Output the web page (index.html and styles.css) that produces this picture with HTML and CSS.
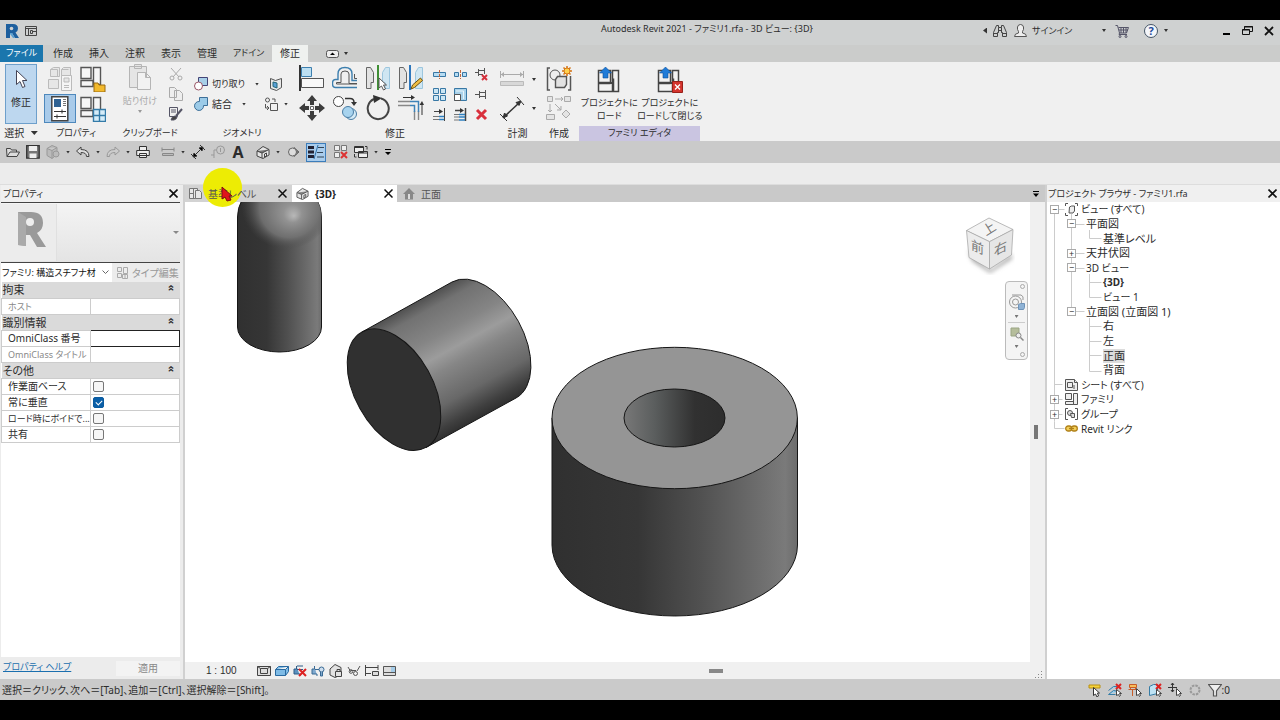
FILE: index.html
```html
<!DOCTYPE html>
<html lang="ja">
<head>
<meta charset="utf-8">
<title>Autodesk Revit 2021</title>
<link rel="stylesheet" href="styles.css">
</head>
<body>
<div class="app">
<header class="titlebar">
  <div class="title-left">
    <svg width="14" height="16" viewBox="0 0 14 16"><path fill="#1d5f9e" d="M1 1h7q5 0 5 4.500q0 3-2.500 4L14 15h-4L7 10H5v5H1z"/><path fill="#5ba0d0" d="M5 10h2l3 5H8L5 11z"/><circle cx="6.500" cy="5.500" r="1.800" fill="#d0d2d2"/></svg>
    <svg width="12" height="12" viewBox="0 0 12 12" fill="none" stroke="#444"><path d="M.5 1.500h11v9H.5zM.5 3.500h11M3.500 3.500v7M5.500 5.500h2v3h-2zM8 6.500h3"/></svg>
  </div>
  <h1 class="app-title">Autodesk Revit 2021 - ファミリ1.rfa - 3D ビュー: {3D}</h1>
  <div class="title-right">
    <i class="lf"></i>
    <button class="find" aria-label="検索"><svg width="14" height="14" viewBox="0 0 14 14" fill="none" stroke="#444"><path d="M3.500 1.500h2v2h3v-2h2l3 7v4h-4v-4h-1v-2h-3v2h-1v4h-4v-4zM1 9.500h4M9 9.500h4M5.500 3.500v5M8.500 3.500v5"/></svg></button>
    <button class="signin"><svg width="13" height="14" viewBox="0 0 13 14" fill="#eee" stroke="#555"><path d="M.5 12.500q0-3 4-3.500V7.500q-1.500-2-1-4.500Q4 .5 6.500.5T9.500 3q.5 2.500-1 4.500V9q4 .5 4 3.500z"/></svg><span>サインイン</span><i class="dn"></i></button>
    <button class="cart" aria-label="ストア"><svg width="14" height="14" viewBox="0 0 14 14" fill="none" stroke="#555568"><path d="M.5 1.500h2l2 7.500h7l2-5.500H3.500M4 6h9M6 4v5M8.500 4v5M11 4v5M4.500 9L4 10.500h8"/><circle cx="5" cy="12.500" r="1"/><circle cx="11" cy="12.500" r="1"/></svg></button>
    <button class="help" aria-label="ヘルプ"><b class="qmark">?</b><i class="dn"></i></button>
    <button class="min" aria-label="最小化"><svg width="8" height="10" viewBox="0 0 8 10"><path d="M0 7h7v2H0z"/></svg></button>
    <button class="win" aria-label="元に戻す"><svg width="11" height="10" viewBox="0 0 11 10" fill="none" stroke="#111"><path d="M2.500 3V.5h8v5H8M2 1h9M.5 3.500h7v5h-7zM.5 4h7"/></svg></button>
    <button class="win" aria-label="閉じる"><svg width="10" height="10" viewBox="0 0 10 10" stroke="#111" stroke-width="1.800"><path d="M1 1l8 8M9 1L1 9"/></svg></button>
  </div>
</header>
<nav class="tabs">
  <button class="file kana">ファイル</button>
  <button>作成</button><button>挿入</button><button>注釈</button><button>表示</button><button>管理</button><button class="addin kana">アドイン</button><button class="on">修正</button>
  <button class="toggle" aria-label="リボン切替"><svg width="13" height="8" viewBox="0 0 13 8"><rect x=".5" y=".5" width="12" height="7" rx="2" fill="#eee" stroke="#555"/><path d="M4 5h5L6.500 2.500z"/></svg><i class="dn"></i></button>
</nav>
<section class="ribbon">
  <div class="panel p-select">
    <div class="body"><button class="modify"><svg width="14" height="20" viewBox="0 0 14 20"><path d="M2.500 1.500v14l3.500-3 2.500 6 2.500-1-2.500-6H13z" fill="#fff" stroke="#445"/></svg>修正</button></div>
    <h2>選択 <i class="dn big"></i></h2>
  </div>
  <div class="panel p-prop">
    <div class="body g2">
      <button aria-label="タイプ"><svg width="26" height="26" viewBox="0 0 26 26" fill="#e6e6e6" stroke="#bbb"><path d="M3.500 3.500l3-2h6v9h-9zM14.500 3.500l2-2h7v9h-9zM1.500 13.500h10v9h-10zM3.500 3.500h7v7M14.500 3.500h7"/><path fill="#f5f5f5" d="M14.500 9.500h10v15h-10z"/><path d="M17 12h5v4h-5zM17 19.500h5M17 21.500h5"/></svg></button>
      <button aria-label="ファミリ カテゴリ"><svg width="26" height="26" viewBox="0 0 26 26"><path d="M1 1.500h10v11H1zM13.500 1.500h7v17h-7zM1 14.500h12v6H1z" fill="#f6f6f6" stroke="#555" stroke-width="1.400"/><path d="M14 17h4l1 2h6v7H14z" fill="#f2b92c" stroke="#9a6a10"/></svg></button>
      <button class="sel" aria-label="プロパティ"><svg width="18" height="26" viewBox="0 0 18 26"><path d="M.8.8h16v24H.8z" fill="#fff" stroke="#444" stroke-width="1.500"/><path d="M3 3h7v8H3z" fill="#2f6293"/><path d="M12 3.500h3M12 5.500h3M12 7.500h3M12 9.500h3" stroke="#777"/><path d="M3 15.500h12M3 20.500h12M11 13.500v4M6 18.500v4" stroke="#333" fill="none"/></svg></button>
      <button aria-label="ファミリ タイプ"><svg width="26" height="26" viewBox="0 0 26 26"><path d="M1 1.500h10v11H1zM13.500 1.500h7v17h-7zM1 14.500h12v6H1z" fill="#f6f6f6" stroke="#555" stroke-width="1.400"/><path d="M13.500 13.500h12v12h-12zM19.500 13.500v12M13.500 19.500h12" fill="#d5ecf8" stroke="#347ba8" stroke-width="1.400"/></svg></button>
    </div>
    <h2 class="kana">プロパティ</h2>
  </div>
  <div class="panel p-clip">
    <div class="body">
      <button class="paste"><svg width="22" height="26" viewBox="0 0 22 26" fill="#e5e5e5" stroke="#b5b5b5"><path d="M.5 2.500h17v21H.5zM5.500.5h7v4h-7z"/><path fill="#f2f2f2" d="M8.500 8.500h8l5 5v12h-13zM16.500 8.500v5h5"/></svg><span class="kana">貼り付け</span><i class="dn"></i></button>
      <div class="col3">
        <button aria-label="切り取り"><svg width="14" height="14" viewBox="0 0 14 14" fill="none" stroke="#aaa"><path d="M2 1l8 9M12 1L4 10"/><circle cx="3" cy="11" r="2"/><circle cx="11" cy="11" r="2"/></svg></button>
        <button aria-label="コピー"><svg width="14" height="14" viewBox="0 0 14 14" fill="#eee" stroke="#aaa"><path d="M.5.5h5l2 2v8h-7zM5.500 3.500h5l3 3v7h-8z"/></svg></button>
        <button aria-label="タイプをコピー"><svg width="14" height="14" viewBox="0 0 14 14" fill="none" stroke="#556"><path d="M.5.500h8v9h-8zM2 3h5M2 5h5"/><path d="M13 2L7 9" stroke-width="2"/><path d="M6 9q-3 0-4 4h3q3-1 3-3z" fill="#444"/></svg></button>
      </div>
    </div>
    <h2 class="kana">クリップボード</h2>
  </div>
  <div class="panel p-geo">
    <div class="body rows2">
      <div><button class="lab"><svg width="14" height="14" viewBox="0 0 14 14" stroke="#447"><path fill="#a8cfe8" d="M4.500.5h9v8h-9z"/><circle cx="4.500" cy="9" r="4" fill="#fff" stroke="#956"/></svg><span class="kana">切り取り</span><i class="dn"></i></button><button aria-label="面を分割"><svg width="14" height="14" viewBox="0 0 14 14" fill="#e8e8e8" stroke="#555"><path d="M1.500 1.500l5 2 6-2v9l-5 3-6-2z"/><path d="M4 5l4 1v5L4 9.500z" fill="#5aa0d8" stroke="#267"/></svg></button></div>
      <div><button class="lab"><svg width="14" height="14" viewBox="0 0 14 14"><path fill="#9ccbe8" stroke="#3d6f98" d="M5.500.500h8v8h-4a4.500 4.500 0 1 1-4-4z"/></svg><span>結合</span><i class="dn"></i></button><button aria-label="ペイント"><svg width="14" height="14" viewBox="0 0 14 14" fill="none" stroke="#555"><circle cx="3.500" cy="3" r="2"/><path d="M6.500 6.500h7v7h-7zM8 2h3v3M1.500 7v4h3M3 9l2 2-2 2"/></svg></button><i class="dn"></i></div>
    </div>
    <h2 class="kana">ジオメトリ</h2>
  </div>
  <div class="panel p-mod">
    <div class="body">
      <div class="g4">
        <button aria-label="位置合わせ"><svg width="26" height="26" viewBox="0 0 26 26"><path d="M1 0v26" stroke="#333" stroke-width="2"/><path d="M2.500 2.500h10v9h-10z" fill="#bcdff2" stroke="#3d7fae"/><path d="M2.500 13.500h22v9h-22z" fill="#f8f8f8" stroke="#555"/></svg></button>
        <button aria-label="オフセット"><svg width="26" height="26" viewBox="0 0 26 26" fill="none"><path d="M25 15.500h-5V9q0-6.500-7-6.500T6 9v5.500H3.500q-3 0-3 4t3 4H25" stroke="#3d7fae" stroke-width="1.400"/><path d="M25 13.500h-2.500V9M25 18.500h-8V9q0-3-4-3t-4 3v8.500H4.500v1.500H25" stroke="#555"/></svg></button>
        <button aria-label="鏡像化 軸を選択"><svg width="26" height="26" viewBox="0 0 26 26"><path d="M1.500 2.500h4l3 5v10H6v6H1.500z" fill="#e2e2e2" stroke="#666"/><path d="M24.500 2.500h-4l-3 5v10H20v6h4.500z" fill="#cfe6f2" stroke="#9cc6de"/><path d="M13 0v25" stroke="#3f8f35" stroke-width="2"/><path d="M14 13v10l2.500-2 2 4 2-1-2-4h3z" fill="#fff" stroke="#555"/></svg></button>
        <button aria-label="鏡像化 軸を描画"><svg width="26" height="26" viewBox="0 0 26 26"><path d="M1.500 2.500h4l3 5v10H6v6H1.500z" fill="#e2e2e2" stroke="#666"/><path d="M24.500 2.500h-4l-3 5v16h7z" fill="#cfe6f2" stroke="#9cc6de"/><path d="M12 0v25" stroke="#2f78bd" stroke-width="2"/><path d="M13 24l1.500-4 8-7 2 2.500-8 7z" fill="#efbd43" stroke="#6b5010"/></svg></button>
        <button aria-label="移動"><svg width="26" height="26" viewBox="0 0 26 26" fill="#3c3c3c"><path d="M13 0l5 6h-3v4h-4V6H8zM13 26l5-6h-3v-4h-4v4H8zM0 13l6-5v3h4v4H6v3zM26 13l-6-5v3h-4v4h4v3z"/><path d="M11.500 11.500h3v3h-3z" fill="#fff" stroke="#666"/></svg></button>
        <button aria-label="コピー"><svg width="26" height="26" viewBox="0 0 26 26" stroke="#4a7da5"><circle cx="6.500" cy="6.500" r="5" fill="#fff" stroke="#444"/><circle cx="19" cy="19" r="5.500" fill="#d4eaf6"/><circle cx="16" cy="17" r="5.500" fill="#a7d3ee"/><path d="M13 3.500h5q4 0 4 4" fill="none" stroke="#333" stroke-width="1.500"/><path d="M19 7h6l-3 4z" fill="#333" stroke="none"/></svg></button>
        <button aria-label="回転"><svg width="26" height="26" viewBox="0 0 26 26"><path d="M16 3.500a10.500 10.500 0 1 1-7 .5" fill="none" stroke="#444" stroke-width="2"/><path d="M8 0l9 3-8 5z" fill="#333"/></svg></button>
        <button aria-label="トリム"><svg width="26" height="26" viewBox="0 0 26 26" fill="none"><path d="M0 6.500h12M0 10.500h12M16.500 16v9M20.500 16v9" stroke="#888" stroke-width="1.400"/><path d="M12 6.500h8.500V17M12 10.500h4.500V17" stroke="#3c82b8" stroke-width="1.500"/><path d="M5 2.500h9M24 20V9" stroke="#333"/><path d="M13 0l4 2.500-4 2.500zM21.500 10L24 6l2 4z" fill="#333"/></svg></button>
      </div>
      <div class="g3">
        <button aria-label="要素を分割"><svg width="13" height="13" viewBox="0 0 13 13"><path d="M.5 4.500h12v4H.5z" fill="#b7dcf2" stroke="#3878a5"/><path d="M6.500 2v9" stroke="#c0653a" stroke-dasharray="3 1"/></svg></button>
        <button aria-label="隙間で分割"><svg width="13" height="13" viewBox="0 0 13 13"><path d="M.5 4.500h4v4h-4zM8.500 4.500h4v4h-4z" fill="#b7dcf2" stroke="#3878a5"/><path d="M6.500 2v9" stroke="#c0653a" stroke-dasharray="3 1"/></svg></button>
        <button aria-label="ピン解除"><svg width="13" height="13" viewBox="0 0 13 13" fill="none"><path d="M0 4.500h3M3.500 1v7M4 2.500h5M4 6.500h4M9.500 0v6" stroke="#555"/><path d="M7 7l5 5M12 7l-5 5" stroke="#d5303c" stroke-width="2"/></svg></button>
        <button aria-label="配列"><svg width="13" height="13" viewBox="0 0 13 13" fill="#cbe6f4" stroke="#3878a5"><path d="M.5.5h5v5h-5zM7.500.5h5v5h-5zM.5 7.500h5v5h-5zM7.500 7.500h5v5h-5z"/></svg></button>
        <button aria-label="尺度"><svg width="13" height="13" viewBox="0 0 13 13"><path d="M.5.5h12v12H.5z" fill="#a9d2ea" stroke="#3878a5"/><path d="M.5 6.500h6v6h-6z" fill="#fff" stroke="#555"/><path d="M2 3h7.500v8" stroke="#e8f4fa" fill="none"/></svg></button>
        <button aria-label="ピン"><svg width="13" height="13" viewBox="0 0 13 13" fill="none" stroke="#555"><path d="M0 6.500h4M4.500 3v7M5 4.500h5M5 8.500h5M10.500 2v9"/></svg></button>
        <button aria-label="単一トリム"><svg width="13" height="13" viewBox="0 0 13 13" fill="none"><path d="M1 3.500h6M11.500 0v13" stroke="#444"/><path d="M6 1l4 2.500L6 6z" fill="#333"/><path d="M0 8.500h6M0 11.500h6" stroke="#777"/><path d="M6 8.500h5M6 11.500h5" stroke="#2c7fc0" stroke-width="1.500"/></svg></button>
        <button aria-label="複数トリム"><svg width="13" height="13" viewBox="0 0 13 13" fill="none"><path d="M1 2.500h6M11.500 0v13" stroke="#444" stroke-width="1.500"/><path d="M6 0l4 2.500L6 5z" fill="#333"/><path d="M0 6.500h5M0 9h5M0 12h5" stroke="#777"/><path d="M5 6.500h6M5 9h6M5 12h6" stroke="#2c7fc0" stroke-width="1.500"/></svg></button>
        <button aria-label="削除"><svg width="13" height="13" viewBox="0 0 13 13"><path d="M2 2l9 9M11 2l-9 9" stroke="#d9303c" stroke-width="3"/></svg></button>
      </div>
    </div>
    <h2>修正</h2>
  </div>
  <div class="panel p-meas">
    <div class="body rows2">
      <div><button aria-label="計測"><svg width="26" height="26" viewBox="0 0 26 26"><path d="M2 7.500h22M1.500 4v7M24.500 4v7" stroke="#aaa"/><path d="M5 5L2 7.500 5 10zM21 5l3 2.500L21 10z" fill="#aaa"/><path d="M1.500 14.500h23v4h-23z" fill="#d8d8d8" stroke="#bbb"/></svg></button><i class="dn"></i></div>
      <div><button aria-label="平行寸法"><svg width="26" height="26" viewBox="0 0 26 26" stroke="#333" fill="none"><path d="M5 21L21 6" stroke-width="1.500"/><path d="M1 18l7 7M18 1l7 8"/><path d="M4 22l1.500-5 3 3zM22 5l-5 1.500 3 3z" fill="#333"/></svg></button><i class="dn"></i></div>
    </div>
    <h2>計測</h2>
  </div>
  <div class="panel p-make">
    <div class="body rows2">
      <button aria-label="グループを作成"><svg width="26" height="26" viewBox="0 0 26 26" fill="none" stroke="#555"><path d="M4 2H1.500v22H4M22 24h2.500V10" stroke-width="1.500"/><circle cx="9" cy="9" r="5" fill="#eee"/><path d="M11.500 10.500h9v8l-2 3h-9v-8z" fill="#e2e2e2" stroke-width="1.400"/><path d="M21 0v10M16 5h10M17.500 1.500l7 7M24.500 1.500l-7 7" stroke="#d37518" stroke-width="1.500"/><circle cx="21" cy="5" r="3" fill="#ffd04c" stroke="#d37518"/></svg></button>
      <button aria-label="類似を作成"><svg width="26" height="26" viewBox="0 0 26 26" fill="#e4e4e4" stroke="#aaa"><path d="M1.500 1.500h5v5h-5zM18.500 1.500h6v5h-6zM.5 19.500h8v5h-8zM9 4h8M15 2l2 2-2 2M4 9v8M2 15l2 2 2-2M9 9l6 6M15 11v4h-4"/><path d="M20 15l4 4-4 4-4-4z"/></svg></button>
    </div>
    <h2>作成</h2>
  </div>
  <div class="panel p-fam">
    <div class="body">
      <button><svg width="24" height="26" viewBox="0 0 24 26"><path d="M1.500 3.500h12v12h-12zM15.500 3.500h6v21h-6zM1.500 16.500h11q4 0 4-5v13h-15z" fill="#f2f2f2" stroke="#444" stroke-width="1.500"/><path d="M8.500 0l6 6h-3.500v5h-5V6H2.500z" fill="#1f7bd8" stroke="#0d4f98" stroke-width=".6"/></svg><span>プロジェクトに<br>ロード</span></button>
      <button><svg width="26" height="26" viewBox="0 0 26 26"><path d="M1.500 3.500h12v12h-12zM15.500 3.500h6v21h-6zM1.500 16.500h11q4 0 4-5v13h-15z" fill="#f2f2f2" stroke="#444" stroke-width="1.500"/><path d="M8.500 0l6 6h-3.500v5h-5V6H2.500z" fill="#1f7bd8" stroke="#0d4f98" stroke-width=".6"/><path d="M15.500 14.500h10v11h-10z" fill="#d4332d" stroke="#992019"/><path d="M18 17.500l5 5M23 17.500l-5 5" stroke="#fff" stroke-width="1.300"/></svg><span>プロジェクトに<br>ロードして閉じる</span></button>
    </div>
    <h2 class="kana">ファミリ エディタ</h2>
  </div>
</section>
<div class="qat">
  <button aria-label="開く"><svg width="14" height="14" viewBox="0 0 14 14" fill="#ddd" stroke="#444"><path d="M1 11.500L.5 3.500h4l1 1.500h5v2M1 11.500l3-4.500h9.500L11 11.500z"/></svg></button>
  <button aria-label="保存"><svg width="14" height="14" viewBox="0 0 14 14"><path d="M.7.700h12.500v12.500H.7z" fill="#777" stroke="#333" stroke-width="1.300"/><path d="M3 1h8v5H3zM3.500 8.500h7V13h-7z" fill="#eee"/></svg></button>
  <button aria-label="同期"><svg width="14" height="14" viewBox="0 0 14 14" fill="#bbb" stroke="#999"><path d="M1 3.500l5-3 5 2v7l-5 4-5-3zM1 3.500l5 2 5-3M6 5.500v8"/><circle cx="10" cy="9" r="3"/></svg></button><i class="dn"></i>
  <button aria-label="元に戻す"><svg width="14" height="14" viewBox="0 0 14 14" fill="#ddd" stroke="#444"><path d="M.5 6L5 2v2.500q8 0 8 7h-2.500q0-4-5.500-4V10z"/></svg></button><i class="dn"></i>
  <button aria-label="やり直し"><svg width="14" height="14" viewBox="0 0 14 14" fill="#ccc" stroke="#999"><path d="M13.500 6L9 2v2.500q-8 0-8 7h2.500q0-4 5.500-4V10z"/></svg></button><i class="dn"></i>
  <button aria-label="印刷"><svg width="14" height="14" viewBox="0 0 14 14" fill="#eee" stroke="#333"><path d="M3.500 1.500h7v4h-7zM.7 5.500h12.600v5H.7zM3.500 8.500h7v4h-7z"/><path d="M3 10.500h8"/></svg></button>
  <button class="sp" aria-label="計測"><svg width="14" height="14" viewBox="0 0 14 14" stroke="#888" fill="#bbb"><path d="M1 4.500h12M1 2.500v4M13 2.500v4M1.500 8.500h11v2h-11z"/></svg></button><i class="dn"></i>
  <button aria-label="寸法"><svg width="14" height="14" viewBox="0 0 14 14" stroke="#333"><path d="M2 12L12 2M0 9l5 5M9 0l5 5"/><path d="M2 12l1-4 3 3zM12 2L8 3l3 3z"/></svg></button>
  <button aria-label="タグ"><svg width="14" height="14" viewBox="0 0 14 14" stroke="#999" fill="none"><circle cx="9.500" cy="5" r="4"/><path d="M5 5H3v5H0M9.500 3v4M3 10v3"/></svg></button>
  <button class="bigA" aria-label="文字">A</button>
  <button class="sp" aria-label="3D ビュー"><svg width="14" height="14" viewBox="0 0 14 14" stroke="#444" fill="#e5e5e5"><path d="M1 6l6-4.500 6 3V10l-6 3.500L1 11z"/><path d="M1 6l5 2 7-3.500M6 8v5" fill="#777"/><path d="M8.500 9l2-1v3l-2 1z"/></svg></button><i class="dn"></i>
  <button aria-label="断面"><svg width="14" height="14" viewBox="0 0 14 14" stroke="#666" fill="#ddd"><path d="M8 2.500L13 7l-5 4.500z" fill="#777"/><circle cx="6.500" cy="7" r="4"/></svg></button>
  <button class="pressed" aria-label="細線"><svg width="16" height="14" viewBox="0 0 16 14"><path d="M0 2.500h6M0 7h6M0 11.500h6" stroke="#223" stroke-width="3"/><path d="M10 2.500h6M9 7.500h6M9 12h7" stroke="#345"/><path d="M10 0L6 14" stroke="#2c6da5"/></svg></button>
  <button class="gap8" aria-label="非表示を閉じる"><svg width="14" height="14" viewBox="0 0 14 14" fill="#eee" stroke="#777"><path d="M.5.5h5v5h-5zM7.500.5h5v5h-5zM.5 7.500h5v5h-5z"/><path d="M7 7l6 6M13 7l-6 6" stroke="#d33" stroke-width="2"/></svg></button>
  <button aria-label="ウィンドウ切替"><svg width="14" height="14" viewBox="0 0 14 14" fill="#eee" stroke="#333"><path d="M.5 1.500h9v6h-9zM4.500 6.500h9v6h-9zM.5 2.500h9M4.500 8h9M11 1.500h2v3M.5 9v3h2"/></svg></button><i class="dn"></i>
  <button aria-label="カスタマイズ"><svg width="8" height="8" viewBox="0 0 8 8"><path d="M1 1h6v1H1zM1 4h6L4 7z"/></svg></button>
</div>
<div class="options"></div>
<main class="work">
  <aside class="props">
    <div class="ptitle"><h2>プロパティ</h2><button aria-label="閉じる"><svg width="9" height="9" viewBox="0 0 9 9" stroke="#111" stroke-width="1.600"><path d="M.5.5l8 8M8.500.5l-8 8"/></svg></button></div>
    <div class="typebox"><div class="thumb"><svg width="30" height="38" viewBox="0 0 30 38"><path d="M1 2h13q12 0 12 11 0 7-6 10l9 14h-9l-7-12H9v11l-8-1z" fill="#9a9a9a"/><path d="M1 2l8 5v29l-8-1z" fill="#aaa"/><circle cx="13" cy="12" r="4" fill="#eee"/></svg></div><i class="dn grey"></i></div>
    <div class="filter"><select aria-label="ファミリ"><option>ファミリ: 構造スチフナ材</option></select><button class="edit"><svg width="11" height="12" viewBox="0 0 11 12" fill="none" stroke="#aaa"><path d="M.5.5h4v4h-4zM6.500.5h4v6h-4zM.5 6.500h4v4h-4zM5.500 7.500h5v4h-5zM8 7.500v4"/></svg>タイプ編集</button></div>
    <div class="ptable">
      <table>
        <tr class="grp"><th colspan="2">拘束<i class="chev">«</i></th></tr>
        <tr class="dim"><td class="kana">ホスト</td><td></td></tr>
        <tr class="grp"><th colspan="2">識別情報<i class="chev">«</i></th></tr>
        <tr><td><label for="omni">OmniClass 番号</label></td><td class="cell"><input id="omni" type="text"></td></tr>
        <tr class="dim"><td class="kana">OmniClass タイトル</td><td></td></tr>
        <tr class="grp"><th colspan="2">その他<i class="chev">«</i></th></tr>
        <tr><td><label for="c1">作業面ベース</label></td><td><input id="c1" type="checkbox"></td></tr>
        <tr><td><label for="c2">常に垂直</label></td><td><input id="c2" type="checkbox" checked></td></tr>
        <tr><td class="kana"><label for="c3">ロード時にボイドで...</label></td><td><input id="c3" type="checkbox"></td></tr>
        <tr><td><label for="c4">共有</label></td><td><input id="c4" type="checkbox"></td></tr>
      </table>
    </div>
    <div class="pfoot"><a class="kana" href="#help">プロパティ ヘルプ</a><button>適用</button></div>
  </aside>
  <section class="viewer">
    <div class="vtabs">
      <div class="vtab"><span class="spot"></span><svg width="14" height="13" viewBox="0 0 14 13" fill="#e8e8e8" stroke="#777"><path d="M.5 1.500h8v10h-8zM.5 6.500h4M4.500 1.500v10"/><path d="M6.500 3.500h4l2 2v6h-6z"/></svg><span class="name">基準レベル</span><button aria-label="閉じる"><svg width="9" height="9" viewBox="0 0 9 9" stroke="#111" stroke-width="1.500"><path d="M.5.5l8 8M8.500.5l-8 8"/></svg></button><svg class="pointer" width="12" height="16" viewBox="0 0 12 16"><path d="M1 1v12l3-2 2 4 4-1-2-4h3z" fill="#e0141c" stroke="#7a1010"/></svg></div>
      <div class="vtab on"><svg width="13" height="13" viewBox="0 0 14 14" stroke="#555" fill="#e5e5e5"><path d="M1 6l6-4.500 6 3V10l-6 3.500L1 11z"/><path d="M1 6l5 2 7-3.500M6 8v5" fill="#888"/><path d="M8.500 9l2-1v3l-2 1z"/></svg><span class="name">{3D}</span><button aria-label="閉じる"><svg width="9" height="9" viewBox="0 0 9 9" stroke="#111" stroke-width="1.500"><path d="M.5.5l8 8M8.500.5l-8 8"/></svg></button></div>
      <div class="vtab last"><svg width="12" height="12" viewBox="0 0 12 12" fill="#888"><path d="M6 0l6 6h-2v5.500H2V6H0z"/><path d="M5 6h2v5H5z" fill="#ddd"/></svg><span class="name">正面</span></div>
      <button class="vmenu" aria-label="タブ一覧"><svg width="8" height="8" viewBox="0 0 8 8"><path d="M1 1h6v1H1zM1 3.500h6L4 7z"/></svg></button>
    </div>
    <div class="stage">
      <div class="canvas">
        <svg class="scene" viewBox="185 202 845 459" preserveAspectRatio="xMinYMin meet">
          <defs>
            <linearGradient id="side"><stop offset="0" stop-color="#303030"/><stop offset=".35" stop-color="#363636"/><stop offset=".6" stop-color="#505050"/><stop offset=".95" stop-color="#7a7a7a"/><stop offset="1" stop-color="#6c6c6c"/></linearGradient>
            <linearGradient id="hole"><stop offset="0" stop-color="#787878"/><stop offset=".3" stop-color="#5b5e5e"/><stop offset=".7" stop-color="#313131"/><stop offset="1" stop-color="#2d2d2d"/></linearGradient>
            <linearGradient id="tilt" gradientUnits="userSpaceOnUse" x1="452" y1="282" x2="516" y2="398"><stop offset="0" stop-color="#505050"/><stop offset=".1" stop-color="#727272"/><stop offset=".3" stop-color="#858585"/><stop offset=".44" stop-color="#9c9c9c"/><stop offset=".55" stop-color="#868686"/><stop offset=".78" stop-color="#686868"/><stop offset=".93" stop-color="#3f3f3f"/><stop offset="1" stop-color="#303030"/></linearGradient>
            <radialGradient id="dome" gradientUnits="userSpaceOnUse" cx="287" cy="203" r="46" fx="294" fy="216"><stop offset="0" stop-color="#b8b8b8"/><stop offset=".2" stop-color="#929292"/><stop offset=".65" stop-color="#737373" stop-opacity=".9"/><stop offset="1" stop-color="#4c4c4c" stop-opacity="0"/></radialGradient>
          </defs>
          <g stroke="#161616">
            <path d="M242 200q-4.500 8-4.500 17v110a42 25 0 0 0 84 0V217q0-9-4.500-17z" fill="url(#side)"/>
            <path d="M242 200q-4.500 8-4.500 17v33h84v-33q0-9-4.500-17z" fill="url(#dome)" stroke="none"/>
            <path d="M362 332l90-50A66 39 61 0 1 516 398L426 447.500z" fill="url(#tilt)"/>
            <ellipse cx="394" cy="389.700" rx="66" ry="39" transform="rotate(61 394 389.700)" fill="#303030"/>
            <path d="M552 418v127a122.700 71 0 0 0 245.500 0V418z" fill="url(#side)"/>
            <ellipse cx="674.700" cy="418" rx="122.700" ry="70.700" fill="#959595"/>
            <ellipse cx="674.500" cy="418" rx="50.500" ry="29" fill="url(#hole)"/>
          </g>
        </svg>
        <svg class="cube" width="52" height="60" viewBox="963 215 52 60">
          <defs><filter id="sh" x="-20%" y="-20%" width="140%" height="140%"><feGaussianBlur stdDeviation="2"/></filter></defs>
          <path d="M968 250l22 20 22-16v5l-22 14-18-12z" fill="#aaa" filter="url(#sh)"/>
          <g stroke="#aaa" stroke-width=".8" fill="#f4f4f4"><path d="M989 218l24 11.500-23.500 12.200-23-11.200z"/><path fill="#ececec" d="M966.500 230.500l23 11.200V269L969 257.500z"/><path fill="#e6e6e6" d="M1013 229.500l-23.500 12.200V269l22-14z"/></g>
          <g class="face"><text transform="translate(971 249) skewY(24)">前</text><text transform="translate(994 256) skewY(-26)">右</text><text transform="translate(986 236) rotate(-32)">上</text></g>
        </svg>
        <div class="navbar">
          <i class="dot"></i>
          <svg width="18" height="18" viewBox="0 0 18 18" fill="none" stroke="#999"><path d="M4 2h9q3 1 2 5"/><circle cx="7.500" cy="9" r="6"/><circle cx="7.500" cy="9" r="3"/><path d="M10.500 11.500l2-1h4v4l-1 2h-5z" fill="#8fb3d6" stroke="#6f93b8"/></svg>
          <i class="dn"></i><hr>
          <svg width="14" height="14" viewBox="0 0 14 14"><path d="M1 1h8v8H1z" fill="#b5bd9b" stroke="#9aa583"/><circle cx="8.500" cy="8.500" r="2.500" fill="#eee" stroke="#888"/><path d="M10.500 10.500l3 3" stroke="#888" stroke-width="1.500"/></svg>
          <i class="dn"></i><i class="dot end"></i>
        </div>
      </div>
      <div class="vscroll"><i></i></div>
    </div>
    <div class="viewbar">
      <button class="scale">1 : 100</button>
      <div class="vicons">
        <button aria-label="詳細レベル"><svg width="14" height="12" viewBox="0 0 14 12" fill="#ddd" stroke="#444"><path d="M.5 1.500h13v9H.5z"/><path d="M3.500 3.500h7v5h-7zM.5 1.500l3 2M13.500 1.500l-3 2"/></svg></button>
        <button aria-label="表示スタイル"><svg width="14" height="12" viewBox="0 0 14 12" fill="#7ebbe6" stroke="#2a6aa0"><path d="M.5 4.500l3-3h10v5l-3 4H.5zM.5 4.500h10l3-3M10.500 4.500v6"/></svg></button>
        <button aria-label="トリミング"><svg width="14" height="12" viewBox="0 0 14 12" fill="#5c92c0" stroke="#2c5c88"><path d="M3.500 1v3H1v5h6v2M4 4.500h6M4 1h6"/><path d="M6 4l7 7M13 4l-7 7" stroke="#d22" stroke-width="2"/></svg></button>
        <button aria-label="トリミング領域"><svg width="14" height="12" viewBox="0 0 14 12" fill="#7fa9cf" stroke="#3a6a94"><path d="M3.500 1v3H1v5h5v2M4 4.500h4"/><circle cx="10.500" cy="4.500" r="2.500" fill="#cde"/><path d="M9.500 7v4h2V7"/></svg></button>
        <button aria-label="ロック"><svg width="14" height="14" viewBox="0 0 14 14" fill="#e2e2e2" stroke="#444"><path d="M1 5l5-4.500 6 3V11l-6 2.500L1 11z"/><path d="M6.500 7.500h6v5h-6zM8 7.500v-2h3v2"/></svg></button>
        <button aria-label="一時的に非表示"><svg width="14" height="12" viewBox="0 0 14 12" fill="none" stroke="#555"><path d="M1 2l3 5M13 1l-3 5M4 5.500h5"/><circle cx="4" cy="6.500" r="1.800"/><circle cx="8.500" cy="8.500" r="2"/></svg></button>
        <button aria-label="拘束を表示"><svg width="14" height="12" viewBox="0 0 14 12" fill="#ddd" stroke="#444"><path d="M.5 0v11M13 0v5M1 2.500h12M1 8.500h5"/><path d="M7.500 6.500h6v4h-6z"/></svg></button>
        <button aria-label="プレビュー"><svg width="14" height="12" viewBox="0 0 14 12" fill="#ddd" stroke="#555"><path d="M.5 1.500h12v9H.5z"/><path d="M8 2h4v5H8z" fill="#a5cce8" stroke="none"/><path d="M.5 7.500h12" /></svg></button>
      </div>
      <i class="hthumb"></i>
      <svg class="grip" width="9" height="9" viewBox="0 0 9 9" fill="#888"><path d="M7 1h1v1H7zM4 4h1v1H4zM7 4h1v1H7zM1 7h1v1H1zM4 7h1v1H4zM7 7h1v1H7z"/></svg>
    </div>
  </section>
  <aside class="browser">
    <div class="ptitle"><h2>プロジェクト ブラウザ - ファミリ1.rfa</h2><button aria-label="閉じる"><svg width="9" height="9" viewBox="0 0 9 9" stroke="#111" stroke-width="1.600"><path d="M.5.5l8 8M8.500.5l-8 8"/></svg></button></div>
    <div class="treewrap">
    <svg class="lines" width="60" height="234" viewBox="0 0 60 234" fill="none" stroke="#ccc"><path d="M7.500 7v212.500M7.500 7.500h10M7.500 182.500h8M7.500 197.500h8M7.500 212.500h8M7.500 219.500v7h10M24.500 12v98M24.500 22.500h13M24.500 51.500h13M24.500 66.500h13M24.500 109.500h13M42.500 28v8.500h12M42.500 72v23.500h12M42.500 80.500h12M42.500 116v53.500h12M42.500 124.500h12M42.500 139.500h12M42.500 153.500h12"/></svg>
    <ul class="tree">
      <li class="l0"><i class="box">−</i><svg width="13" height="13" viewBox="0 0 13 13" fill="none" stroke="#555"><path d="M3 .5H.5V3M10 .5h2.500V3M3 12.500H.5V10M10 12.500h2.500V10"/><path d="M4.500 4l2-1h3v5l-1.500 2h-4z" fill="#eee"/></svg><span>ビュー (すべて)</span></li>
      <li class="l1"><i class="box">−</i><span>平面図</span></li>
      <li class="l2"><span>基準レベル</span></li>
      <li class="l1"><i class="box">+</i><span>天井伏図</span></li>
      <li class="l1"><i class="box">−</i><span class="small">3D ビュー</span></li>
      <li class="l2"><b class="small">{3D}</b></li>
      <li class="l2"><span class="small">ビュー 1</span></li>
      <li class="l1"><i class="box">−</i><span>立面図 (立面図 1)</span></li>
      <li class="l2"><span>右</span></li>
      <li class="l2"><span>左</span></li>
      <li class="l2"><span class="cur">正面</span></li>
      <li class="l2"><span>背面</span></li>
      <li class="l0"><i class="nobox"></i><svg width="13" height="12" viewBox="0 0 13 12" fill="#eee" stroke="#555"><path d="M.5.500h9l3 3v8H.5z"/><path d="M2.500 3.500h5v5h-5zM9.500.5v3h3M9 6v4"/></svg><span>シート (すべて)</span></li>
      <li class="l0"><i class="box">+</i><svg width="13" height="12" viewBox="0 0 13 12" fill="#eee" stroke="#555"><path d="M.5.500h6v6h-6zM8.500.5h4v11h-4zM.5 8.500h8v3h-8z"/></svg><span>ファミリ</span></li>
      <li class="l0"><i class="box">+</i><svg width="13" height="12" viewBox="0 0 13 12" fill="#ddd" stroke="#555"><path d="M3 .5H.5v11H3M10 .5h2.500v11H10" fill="none"/><circle cx="5" cy="5" r="2.500"/><path d="M5.500 5.500h4v4h-3z"/></svg><span>グループ</span></li>
      <li class="l0"><i class="nobox"></i><svg width="13" height="7" viewBox="0 0 13 7" fill="#f2ce58" stroke="#b08018" stroke-width="1.300"><rect x=".7" y="1" width="6" height="5" rx="2.500"/><rect x="6.300" y="1" width="6" height="5" rx="2.500"/><path d="M4 3.500h5"/></svg><span>Revit リンク</span></li>
    </ul>
    </div>
  </aside>
</main>
<footer class="status">
  <p>選択＝クリック、次へ＝[Tab]、追加＝[Ctrl]、選択解除＝[Shift]。</p>
  <div class="sicons">
    <button aria-label="リンクを選択"><svg width="14" height="14" viewBox="0 0 14 14"><path d="M1 2h11v3H1z" fill="#f5d33d" stroke="#b98f10"/><path d="M5.500 4.500v8l2-1.500 1.500 3 1.500-1-1-3h2z" fill="#fff" stroke="#333"/></svg></button>
    <button aria-label="アンダーレイ"><svg width="14" height="14" viewBox="0 0 14 14"><path d="M.5 7.500l5-4h4M.5 11.500l5-4 5 1M.5 11.500h7" fill="#9bd0ee" stroke="#357ca6"/><path d="M8 1l5 5M13 1L8 6" stroke="#d22" stroke-width="2"/><path d="M8.500 6.500v6l2-1 1 2 1-1-1-2h2z" fill="#fff" stroke="#444"/></svg></button>
    <button aria-label="ピン要素"><svg width="14" height="14" viewBox="0 0 14 14"><path d="M1.500 1.500h7v3h-7zM.5 6.500h9M4.500 7v6M2.500 4v3M7.500 4v3" fill="#f6bd5b" stroke="#c85c28"/><path d="M8.500 5.500v7l2-1 1 2 1-1-1-2h2z" fill="#fff" stroke="#444"/></svg></button>
    <button aria-label="面で選択"><svg width="14" height="14" viewBox="0 0 14 14"><path d="M1.500 3.500l4-2h4v9l-8 2z" fill="#bfe3f4" stroke="#357ca6"/><path d="M8 1l5 5M13 1L8 6" stroke="#d22" stroke-width="2"/><path d="M8.500 6.500v6l2-1 1 2 1-1-1-2h2z" fill="#fff" stroke="#444"/></svg></button>
    <button aria-label="ドラッグ"><svg width="14" height="14" viewBox="0 0 14 14"><path d="M0 4.500h9M4.500 0v9M3 2l1.500-2L6 2M3 7l1.500 2L6 7" stroke="#333" fill="none"/><path d="M8.500 5.500v7l2-1 1 2 1-1-1-2h2z" fill="#fff" stroke="#444"/></svg></button>
    <button aria-label="処理中"><svg width="14" height="14" viewBox="0 0 14 14"><circle cx="7" cy="7" r="4.500" fill="none" stroke="#999" stroke-width="2" stroke-dasharray="2.500 1"/></svg></button>
    <button aria-label="フィルタ"><svg width="14" height="14" viewBox="0 0 14 14"><path d="M.5 1.500h13L8.500 8v5h-3V8z" fill="#eee" stroke="#555" stroke-width="1.200"/></svg><span>:0</span></button>
  </div>
</footer>
</div>
</body>
</html>
```
FILE: styles.css
```css
* { box-sizing: border-box; }
body {
  margin: 0;
  background: #000;
  color: #2c2c2c;
  font: 11px/14px "Noto Sans", "Noto Sans CJK JP", sans-serif;
  font-feature-settings: "palt";
}
.app { display: flex; flex-direction: column; height: 100vh; padding: 20px 0; }
svg { display: block; flex: none; }
h1, h2, p, ul { margin: 0; padding: 0; font-size: inherit; font-weight: normal; }
i { font-style: normal; }
button {
  display: flex;
  align-items: center;
  margin: 0;
  padding: 0;
  border: 0;
  background: none;
  color: inherit;
  font: inherit;
  font-feature-settings: inherit;
  white-space: nowrap;
}
.dn, .lf { flex: none; width: 4px; height: 3px; background: #333; clip-path: polygon(0 0, 100% 0, 50% 100%); }
.dn.big { display: inline-block; width: 7px; height: 4px; margin: 0 0 2px 4px; }
.dn.grey { width: 6px; background: #888; }
.lf { height: 6px; clip-path: polygon(100% 0, 100% 100%, 0 50%); }

.titlebar { display: flex; align-items: flex-start; height: 25px; background: #cfd1d1; font-size: 9px; }
.title-left { display: flex; flex: 1; align-items: center; gap: 6px; height: 21px; padding-left: 5px; }
.app-title { flex: 0 0 382px; padding-top: 2px; white-space: nowrap; }
.title-right { display: flex; align-items: center; height: 21px; padding-right: 6px; }
.find { margin: 0 7px 0 6px; }
.signin { gap: 5px; width: 92px; }
.signin span { flex: 1; text-align: left; }
.cart { margin: 0 15px 0 9px; }
.help { gap: 6px; }
.qmark { width: 14px; height: 14px; border: 1px solid #456; border-radius: 50%; background: #f4f6fa; color: #234a9a; font-size: 11px; line-height: 12px; }
.min { margin-left: 55px; }
.win { margin-left: 11px; }

.tabs { display: flex; height: 17px; background: #cbcccb; font-size: 10px; }
.tabs button { justify-content: center; min-width: 36px; padding: 0 8px 2px; }
.tabs .file { width: 43px; margin: 0 2px 0 0; padding: 0 0 2px; background: #1b76ad; color: #fff; font-size: 9px; }
.tabs .addin { width: 47px; padding: 0 0 2px; }
.tabs .on { background: #eff1ef; min-width: 35px; }
.tabs .toggle { gap: 5px; margin-left: 10px; padding-bottom: 0; }

.ribbon { display: flex; height: 79px; background: #f0f0f0; font-size: 10px; }
.panel { display: flex; flex-direction: column; }
.panel .body { display: flex; flex: 1; padding-top: 2px; }
.panel h2 { height: 15px; line-height: 14px; text-align: center; white-space: nowrap; }
.p-select { width: 42px; }
.p-select .body { padding-left: 5px; }
.modify { flex-direction: column; gap: 6px; width: 32px; height: 60px; padding-top: 4px; border: 1px solid #6d9fcb; background: #bdd7ef; }
.p-prop { width: 68px; }
.panel .g2 { display: grid; grid-template-columns: 32px 32px; grid-template-rows: 29px 29px; padding-left: 2px; gap: 1px; }
.g2 button { justify-content: center; }
.g2 .sel { border: 1px solid #4e88bc; background: #a9cbea; }
.p-clip { width: 80px; }
.p-clip .body { gap: 11px; padding-left: 12px; }
.paste { flex-direction: column; width: 36px; color: #aaa; }
.paste span { margin: 4px 0 2px; }
.paste .dn { background: #999; }
.col3 { display: flex; flex-direction: column; gap: 6px; padding-top: 3px; }
.p-geo { width: 104px; }
.panel .rows2 { flex-direction: column; }
.p-geo .body { gap: 0; padding: 12px 0 0 4px; }
.p-geo .body div { display: flex; align-items: center; gap: 6px; height: 20px; }
.lab { gap: 4px; }
.lab .dn { margin: 0 4px 0 6px; }
.p-geo .lab { min-width: 64px; }
.p-mod { width: 202px; }
.p-mod .body { gap: 9px; padding-left: 5px; }
.g4 { display: grid; grid-template-columns: repeat(4, 26px); grid-auto-rows: 26px; gap: 4px 7px; padding-top: 1px; }
.g3 { display: grid; grid-template-columns: repeat(3, 13px); grid-auto-rows: 13px; gap: 7px 8px; padding-top: 4px; }
.p-meas { width: 43px; }
.p-meas .body { padding: 3px 0 0 3px; }
.p-meas .body div { display: flex; align-items: center; gap: 7px; height: 29px; }
.p-make { width: 40px; align-items: center; }
.p-make .body { gap: 3px; padding-top: 4px; }
.p-fam { width: 121px; }
.p-fam .body { justify-content: space-around; padding-top: 5px; }
.p-fam button { flex-direction: column; flex: none; width: 60px; font-size: 9px; line-height: 13px; }
.p-fam span { padding-top: 3px; }
.p-fam h2 { background: #cac5e1; }

.qat { display: flex; align-items: center; gap: 6px; height: 22px; padding-left: 6px; background: #cacaca; }
.qat .sp { margin-left: 5px; }
.qat .gap8 { margin-left: 2px; }
.bigA { justify-content: center; width: 14px; font-size: 16px; font-weight: bold; }
.pressed { justify-content: center; width: 20px; height: 19px; border: 1px solid #3c7dbb; background: #a9ccec; }
.options { height: 22px; background: #ececec; border-bottom: 1px solid #ddd; }

.work { display: flex; flex: 1; min-height: 0; background: #ececec; }
.ptitle { display: flex; align-items: center; justify-content: space-between; height: 17px; padding: 0 3px 0 1px; background: #f0f0f0; font-size: 9px; }
.props { display: flex; flex-direction: column; width: 185px; padding: 0 3px 0 1px; border-right: 2px solid #d0d0d0; }
.props .ptitle { padding: 0 2px; }
.typebox { display: flex; align-items: center; justify-content: space-between; height: 61px; padding-right: 1px; border: solid #444; border-width: 1px 0; background: linear-gradient(#f4f4f4, #e4e4e4); }
.thumb { width: 56px; height: 57px; padding: 6px 16px; border-right: 1px solid #e0e0e0; background: #ececec; }
.filter { display: flex; height: 19px; font-size: 9px; }
.filter select {
  width: 111px;
  padding: 0 10px 0 1px;
  border: 0;
  border-radius: 0;
  appearance: none;
  color: #111;
  font: inherit;
  font-feature-settings: inherit;
  background: url("data:image/svg+xml,%3Csvg xmlns='http://www.w3.org/2000/svg' width='7' height='5' fill='none' stroke='%23666'%3E%3Cpath d='M.5.5l3 3 3-3'/%3E%3C/svg%3E") no-repeat right 3px center #fff;
}
.edit { flex: 1; gap: 4px; padding-left: 5px; color: #999; font-size: 10px; }
.ptable { flex: 1; background: #fff; font-size: 10px; }
.ptable table { width: 100%; table-layout: fixed; border-collapse: collapse; font-size: inherit; }
.ptable tr { height: 16px; }
.ptable td, .ptable th { height: 16px; padding: 0 0 0 6px; border: 1px solid #ccc; line-height: 15px; white-space: nowrap; }
.ptable td:first-child, .ptable td:last-child { width: 50%; }
.ptable td:last-child { padding: 0 2px; }
.ptable .grp th { padding: 0 4px 0 1px; border: 0; background: #dadada; text-align: left; font-size: 11px; font-weight: normal; }
.chev { float: right; line-height: 12px; transform: rotate(90deg); font-weight: bold; }
.dim { color: #888; }
.ptable td.cell { padding: 0; border: 1px solid #222; }
#omni { display: block; width: 100%; height: 14px; border: 0; padding: 0 2px; }
input[type="checkbox"] { display: block; appearance: none; width: 11px; height: 11px; margin: 0; border: 1px solid #777; border-radius: 2px; background: #f6f6f6; }
input:checked { border-color: #0a5a9e; background: #0a5fa8; }
input[type="checkbox"]:checked { background: #0a5fa8; }
input:checked::after { content: ""; display: block; width: 5px; height: 3px; margin: 2px; border: solid #fff; border-width: 0 0 1px 1px; transform: rotate(-45deg); }
.pfoot { display: flex; justify-content: space-between; align-items: center; height: 22px; padding-left: 2px; font-size: 10px; }
.pfoot a { color: #1b6fae; padding-bottom: 3px; }
.pfoot button { justify-content: center; width: 64px; height: 15px; background: #f3f3f3; color: #888; }

.viewer { display: flex; flex: 1; flex-direction: column; min-width: 0; }
.vtabs { display: flex; height: 17px; background: #c9c9c9; font-size: 10px; }
.vtab { position: relative; display: flex; align-items: center; gap: 5px; width: 107px; padding: 0 5px 0 4px; background: #d3d3d3; color: #555; }
.vtab .name { position: relative; z-index: 2; flex: 1; white-space: nowrap; }
.vtab.on { gap: 6px; width: 105px; padding-right: 4px; background: #fff; color: #222; font-weight: bold; }
.vtab.last { gap: 6px; padding-left: 6px; background: none; }
.spot { position: absolute; z-index: 1; left: 18px; top: -17px; width: 39px; height: 39px; border-radius: 50%; background: #edec04; }
.pointer { position: absolute; z-index: 3; left: 36px; top: 1px; }
.vmenu { margin: 0 5px 0 auto; }
.stage { display: flex; flex: 1; min-height: 0; }
.canvas { position: relative; flex: 1; overflow: hidden; background: #fff; }
.scene { width: 100%; height: 100%; }
.cube { position: absolute; right: 15px; top: 13px; }
.face { fill: #777; font-size: 13px; }
.navbar { position: absolute; right: 2px; top: 79px; display: flex; flex-direction: column; align-items: center; gap: 4px; width: 23px; height: 79px; padding: 2px; border: 1px solid #bbb; border-radius: 4px; background: #f4f4f4; }
.navbar hr { width: 100%; margin: 0; border: 0; border-top: 1px solid #ccc; }
.dot { align-self: flex-end; width: 5px; height: 5px; border: 1px solid #aaa; border-radius: 50%; }
.dot.end { margin-top: auto; }
.navbar .dn { background: #777; }
.vscroll { display: flex; align-items: center; justify-content: center; width: 15px; padding-right: 3px; background: #f0f0f0; }
.vscroll i { width: 4px; height: 14px; background: #777; }
.viewbar { display: flex; align-items: center; height: 17px; padding: 0 2px 0 21px; background: #f0f0f0; }
.scale { width: 51px; font: 10px/14px "Liberation Sans", sans-serif; }
.vicons { display: flex; flex: 1; gap: 4px; }
.vicons button { width: 14px; }
.hthumb { width: 14px; height: 4px; margin-right: 311px; background: #888; }
.grip { align-self: flex-end; }

.browser { width: 235px; border-left: 2px solid #d0d0d0; background: #fff; }
.treewrap { position: relative; }
.lines { position: absolute; left: 0; top: 0; }
.tree { position: relative; display: grid; grid-template-rows: repeat(16, 1fr); height: 234px; list-style: none; line-height: 14px; }
.tree li { display: flex; align-items: center; white-space: nowrap; }
.tree svg { margin: 0 3px 0 6px; }
.l0 { padding-left: 3px; }
.tree .l0, .small { font-size: 10px; }
.l1 { padding-left: 20px; }
.l2 { padding-left: 56px; }
.l1 .box { margin-right: 10px; }
.box, .nobox { width: 9px; height: 9px; }
.box { border: 1px solid #aaa; background: #fff; color: #333; font-size: 9px; line-height: 7px; text-align: center; }
.cur { background: #dcdcdc; }

.status { display: flex; align-items: center; justify-content: space-between; height: 21px; padding: 0 50px 0 2px; background: #cacaca; }
.sicons { display: flex; gap: 6px; font-size: 10px; }
.status p { font-size: 10px; }
.kana { font-size: 9px; }
```
